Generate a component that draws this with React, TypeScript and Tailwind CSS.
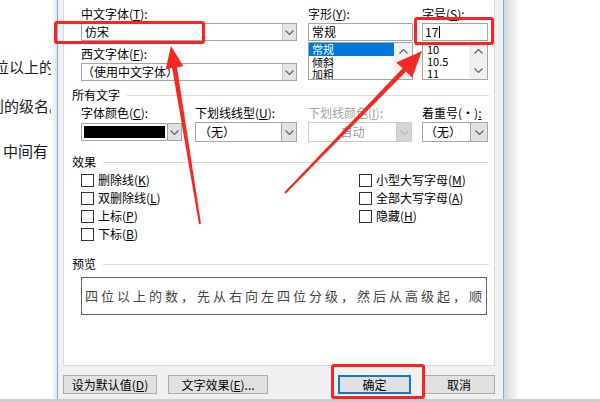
import React from "react";

const Chev = ({ color = "#606060", dir = "down" }: { color?: string; dir?: "up" | "down" }) => (
  <svg width="9" height="5" viewBox="0 0 9 5" className="block">
    <path
      d={dir === "down" ? "M0.5 0.5L4.5 4.5L8.5 0.5" : "M0.5 4.5L4.5 0.5L8.5 4.5"}
      fill="none"
      stroke={color}
      strokeWidth="1.1"
    />
  </svg>
);

const U = ({ c }: { c: string }) => <span className="underline underline-offset-[1px]">{c}</span>;

const Section = ({ title, className = "" }: { title: string; className?: string }) => (
  <div className={`flex items-center h-[16px] pl-[8px] pr-[5px] ${className}`}>
    <span className="leading-[16px]">{title}</span>
    <div className="flex-1 h-px bg-[#dadada] ml-[7px]" />
  </div>
);

const Check = ({ children }: { children: React.ReactNode }) => (
  <div className="flex items-center h-[18px]">
    <div className="w-[13px] h-[13px] border border-[#333333] bg-white" />
    <span className="ml-[4px] leading-[16px] whitespace-nowrap">{children}</span>
  </div>
);

const Btn = ({ children, className = "" }: { children: React.ReactNode; className?: string }) => (
  <div
    className={`h-[19px] flex items-center justify-center bg-[#e1e1e1] leading-[16px] whitespace-nowrap ${className}`}
  >
    {children}
  </div>
);

export default function App() {
  return (
    <div className="relative w-[600px] h-[402px] overflow-hidden bg-white font-['Noto_Sans_CJK_SC','Noto_Sans',sans-serif] text-[12px] text-black">
      <div className="flex h-[399px]">
        {/* document behind */}
        <div className="w-[57px] flex">
          <div className="flex-1 bg-white text-[15px] leading-[20px] text-[#1a1a1a] whitespace-nowrap overflow-hidden">
            <div className="mt-[57px] ml-[-6px]">位以上的</div>
            <div className="mt-[19px] ml-[-11px]">则的级名。</div>
            <div className="mt-[25px] ml-[3px]">中间有</div>
          </div>
          <div className="w-[6px] bg-gradient-to-r from-white to-[#e4e4e4]" />
        </div>
        <div className="w-px bg-[#58c2dc]" />

        {/* dialog */}
        <div className="w-[445px] bg-[#f0f0f0] flex flex-col pl-[5px] pr-[8px]">
          <div className="h-[366px] border border-t-0 border-[#d9d9d9] bg-white flex flex-col">
            {/* row 1 */}
            <div className="flex mt-[6px] pl-[17px]">
              <div className="w-[216px] flex flex-col">
                <div className="h-[16px] leading-[16px]">
                  中文字体(<U c="T" />):
                </div>
                <div className="mt-[1px] h-[18px] flex border border-[#a5a5a5] bg-white">
                  <div className="flex-1 pl-[3px] leading-[16px]">仿宋</div>
                  <div className="w-[14px] bg-[#e3e3e3] border-l border-[#cccccc] flex items-center justify-center">
                    <Chev />
                  </div>
                </div>
                <div className="mt-[5px] h-[16px] leading-[16px]">
                  西文字体(<U c="F" />):
                </div>
                <div className="mt-[1px] h-[18px] flex border border-[#a5a5a5] bg-white">
                  <div className="flex-1 pl-[0px] leading-[16px]">（使用中文字体）</div>
                  <div className="w-[14px] bg-[#e3e3e3] border-l border-[#cccccc] flex items-center justify-center">
                    <Chev />
                  </div>
                </div>
              </div>

              <div className="w-[105px] ml-[11px] flex flex-col">
                <div className="h-[16px] leading-[16px]">
                  字形(<U c="Y" />):
                </div>
                <div className="mt-[1px] h-[18px] border border-[#a5a5a5] bg-white pl-[3px] leading-[16px]">常规</div>
                <div className="mt-[1px] h-[38px] border border-[#a5a5a5] bg-white flex overflow-hidden">
                  <div className="flex-1 flex flex-col text-[11px]">
                    <div className="h-[13px] shrink-0 leading-[13px] bg-[#0078d7] text-white pl-[3px]">常规</div>
                    <div className="h-[12px] shrink-0 leading-[12px] pl-[3px]">倾斜</div>
                    <div className="h-[12px] shrink-0 leading-[12px] pl-[3px]">加粗</div>
                  </div>
                  <div className="w-[18px] bg-[#f0f0f0] flex flex-col items-center pt-[6px]">
                    <Chev dir="up" />
                  </div>
                </div>
              </div>

              <div className="w-[66px] ml-[9px] flex flex-col">
                <div className="h-[16px] leading-[16px]">
                  字号(<U c="S" />):
                </div>
                <div className="mt-[1px] h-[18px] border border-[#a5a5a5] bg-white pl-[2px] leading-[16px] flex items-center">
                  <span>17</span>
                  <span className="w-px h-[12px] bg-black ml-[1px]" />
                </div>
                <div className="mt-[1px] h-[38px] border border-[#a5a5a5] bg-white flex overflow-hidden">
                  <div className="flex-1 flex flex-col pl-[4px] text-[11px]">
                    <div className="h-[12px] shrink-0 leading-[12px]">10</div>
                    <div className="h-[12px] shrink-0 leading-[12px]">10.5</div>
                    <div className="h-[12px] shrink-0 leading-[12px]">11</div>
                  </div>
                  <div className="w-[18px] bg-[#f0f0f0] flex flex-col items-center pt-[6px]">
                    <Chev dir="up" />
                    <div className="mt-[14px]">
                      <Chev dir="down" />
                    </div>
                  </div>
                </div>
              </div>
            </div>

            <Section title="所有文字" className="mt-[6px]" />

            {/* row 2 */}
            <div className="flex mt-[2px] pl-[17px]">
              <div className="w-[101px] flex flex-col">
                <div className="h-[16px] leading-[16px]">
                  字体颜色(<U c="C" />):
                </div>
                <div className="mt-[2px] h-[18px] flex">
                  <div className="w-[87px] border border-[#a5a5a5] bg-white p-[2px]">
                    <div className="w-full h-full bg-black" />
                  </div>
                  <div className="w-[14px] bg-[#e1e1e1] border border-l-0 border-[#a5a5a5] flex items-center justify-center">
                    <Chev />
                  </div>
                </div>
              </div>
              <div className="w-[102px] ml-[13px] flex flex-col">
                <div className="h-[16px] leading-[16px] whitespace-nowrap">
                  下划线线型(<U c="U" />):
                </div>
                <div className="mt-[1px] h-[20px] flex border border-[#a5a5a5] bg-white">
                  <div className="flex-1 pl-[3px] leading-[18px]">（无）</div>
                  <div className="w-[15px] bg-[#e1e1e1] border-l border-[#a5a5a5] flex items-center justify-center">
                    <Chev />
                  </div>
                </div>
              </div>
              <div className="w-[104px] ml-[11px] flex flex-col text-[#a3a3a3]">
                <div className="h-[16px] leading-[16px] whitespace-nowrap">
                  下划线颜色(<U c="I" />):
                </div>
                <div className="mt-[1px] h-[20px] flex border border-[#cccccc] bg-white">
                  <div className="flex-1 text-center leading-[18px] text-[#9a9a9a]">自动</div>
                  <div className="w-[15px] bg-[#d5d5d5] border-l border-[#cccccc] flex items-center justify-center">
                    <Chev color="#b5b5b5" />
                  </div>
                </div>
              </div>
              <div className="w-[66px] ml-[10px] flex flex-col">
                <div className="h-[16px] leading-[16px] whitespace-nowrap overflow-hidden">
                  着重号(·)<U c=":" />
                </div>
                <div className="mt-[1px] h-[20px] flex border border-[#a5a5a5] bg-white">
                  <div className="flex-1 pl-[2px] leading-[18px] whitespace-nowrap overflow-hidden">（无）</div>
                  <div className="w-[17px] bg-[#e1e1e1] border-l border-[#a5a5a5] flex items-center justify-center">
                    <Chev />
                  </div>
                </div>
              </div>
            </div>

            <Section title="效果" className="mt-[12px]" />

            <div className="flex mt-[1px] pl-[17px]">
              <div className="w-[278px] flex flex-col">
                <Check>
                  删除线(<U c="K" />)
                </Check>
                <Check>
                  双删除线(<U c="L" />)
                </Check>
                <Check>
                  上标(<U c="P" />)
                </Check>
                <Check>
                  下标(<U c="B" />)
                </Check>
              </div>
              <div className="flex flex-col">
                <Check>
                  小型大写字母(<U c="M" />)
                </Check>
                <Check>
                  全部大写字母(<U c="A" />)
                </Check>
                <Check>
                  隐藏(<U c="H" />)
                </Check>
              </div>
            </div>

            <Section title="预览" className="mt-[13px]" />

            <div className="mt-[5px] ml-[17px] w-[406px] h-[38px] border border-[#646464] bg-white flex items-center pl-[3px] overflow-hidden">
              <span className="text-[13px] tracking-[3px] text-[#454545] whitespace-nowrap leading-[16px]">
                四位以上的数，先从右向左四位分级，然后从高级起，顺
              </span>
            </div>
          </div>

          <div className="flex justify-between mt-[9px]">
            <div className="flex gap-[11px]">
              <Btn className="w-[94px] border border-[#adadad]">
                设为默认值(<U c="D" />)
              </Btn>
              <Btn className="w-[100px] border border-[#adadad]">
                文字效果(<U c="E" />)...
              </Btn>
            </div>
            <div className="flex gap-[12px]">
              <Btn className="w-[73px] border-2 border-[#0a78d7]">确定</Btn>
              <Btn className="w-[72px] border border-[#adadad]">取消</Btn>
            </div>
          </div>
        </div>

        <div className="w-px bg-[#58c2dc]" />
        <div className="w-[16px] bg-gradient-to-r from-[#d6d6d6] to-white" />
        <div className="flex-1 bg-white" />
      </div>
      <div className="h-[3px] bg-[#cdcdcd]" />

      {/* annotations */}
      <div className="absolute left-[54px] top-[21px] w-[151px] h-[23px] border-[3px] border-[#fb2222] rounded-[3px]" />
      <div className="absolute left-[414px] top-[17px] w-[80px] h-[28px] border-[3px] border-[#fb2222] rounded-[3px]" />
      <div className="absolute left-[331px] top-[364px] w-[94px] h-[35px] border-[3px] border-[#fb2222] rounded-[3px]" />
      <svg className="absolute left-0 top-0 pointer-events-none" width="600" height="402" viewBox="0 0 600 402">
        <polygon
          fill="#f42a22"
          points="171,46 183.4,66.3 177.0,67.3 201.0,223.8 199.0,224.2 172.1,68.1 165.7,69.2"
        />
        <polygon
          fill="#f42a22"
          points="422,51 412.2,77.5 406.0,71.5 285.7,193.7 284.3,192.3 402.6,68.3 396.2,62.4"
        />
      </svg>
    </div>
  );
}
